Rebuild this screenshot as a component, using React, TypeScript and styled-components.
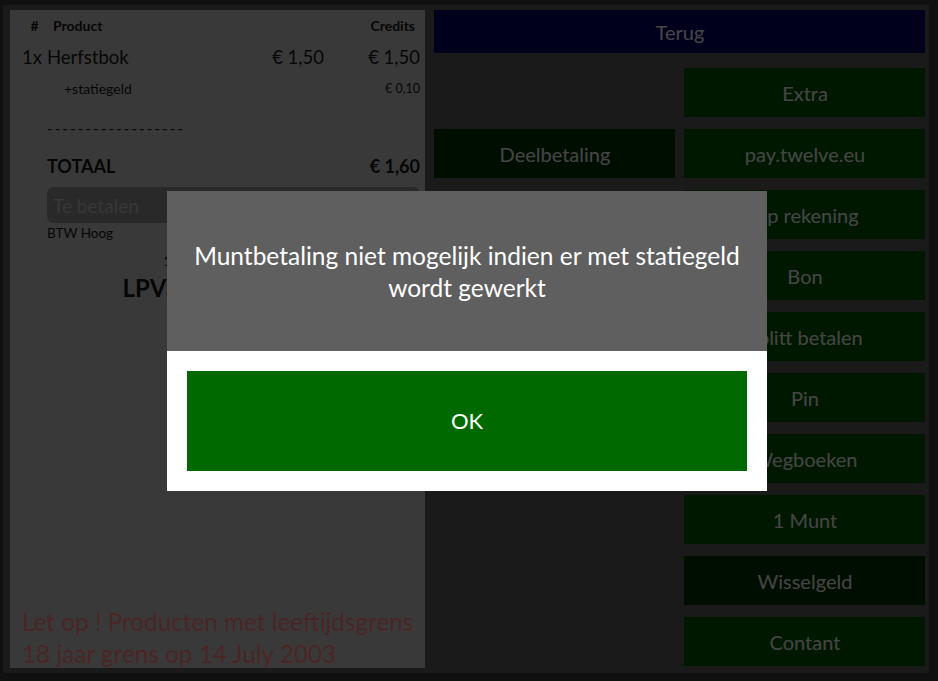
import React from 'react';
import styled, { createGlobalStyle } from 'styled-components';

const GlobalStyle = createGlobalStyle`
  html, body {
    margin: 0;
    padding: 0;
    background: #111111;
  }
  body {
    font-family: Lato, 'Open Sans', sans-serif;
  }
  * {
    box-sizing: border-box;
  }
`;

const Screen = styled.div`
  position: relative;
  width: 938px;
  height: 681px;
  overflow: hidden;
  background: #393939;
  padding: 5px 9px 8px 3px;
`;

const PayWindow = styled.div`
  height: 100%;
  display: flex;
  gap: 9px;
  padding: 5px 4px 5px 7px;
  background: #5a5a5a;
`;

const Receipt = styled.section`
  width: 415px;
  flex-shrink: 0;
  display: flex;
  flex-direction: column;
  padding: 6px 5px 0 12px;
  background: #c5c5c5;
  color: #151515;
`;

const Row = styled.div<{ $mt?: number; $size: number; $lh: number; $bold?: boolean }>`
  display: grid;
  grid-template-columns: 25px 1fr 74px 96px;
  align-items: center;
  margin-top: ${p => p.$mt || 0}px;
  font-size: ${p => p.$size}px;
  line-height: ${p => p.$lh}px;
  font-weight: ${p => (p.$bold ? 700 : 400)};
  white-space: nowrap;
`;

const Cell = styled.span<{ $align?: 'left' | 'center' | 'right'; $pad?: number }>`
  text-align: ${p => p.$align || 'left'};
  padding-left: ${p => p.$pad || 0}px;
`;

const RightCell = styled.span<{ $pad?: number; $size?: number }>`
  text-align: right;
  padding-right: ${p => p.$pad || 0}px;
  font-size: ${p => (p.$size ? `${p.$size}px` : 'inherit')};
`;

const Dashes = styled.div`
  margin: 19px 0 0 25px;
  font-size: 15px;
  line-height: 20px;
  letter-spacing: 2.1px;
`;

const PayInput = styled.input`
  margin: 10px 0 0 25px;
  width: 373px;
  height: 36px;
  border: none;
  border-radius: 7px;
  background: #8c8c8c;
  padding: 0 6px;
  font-family: inherit;
  font-size: 19px;
  outline: none;
  &::placeholder {
    color: #bcbcbc;
  }
`;

const SmallNote = styled.div`
  margin: 2px 0 0 25px;
  font-size: 13.5px;
  line-height: 16px;
`;

const CenterLine = styled.div<{ $mt: number; $size: number; $lh: number }>`
  margin-top: ${p => p.$mt}px;
  text-align: center;
  font-weight: 700;
  font-size: ${p => p.$size}px;
  line-height: ${p => p.$lh}px;
  white-space: nowrap;
`;

const AgeWarning = styled.div`
  margin-top: auto;
  margin-bottom: -2px;
  color: #ff8080;
  font-size: 24.3px;
  line-height: 32px;
  white-space: nowrap;
`;

const ButtonGrid = styled.div`
  flex: 1;
  display: grid;
  grid-template-columns: 1fr 1fr;
  grid-template-rows: 46px repeat(10, 49px);
  column-gap: 9px;
  row-gap: 12px;
  align-content: start;
`;

type Tone = 'navy' | 'green' | 'dark';

const toneColors: Record<Tone, string> = {
  navy: '#000066',
  green: '#005400',
  dark: '#003200',
};

const PayButton = styled.button<{ $tone: Tone; $col: string; $row: number }>`
  grid-column: ${p => p.$col};
  grid-row: ${p => p.$row};
  margin-bottom: ${p => (p.$row === 1 ? 3 : 0)}px;
  border: none;
  background: ${p => toneColors[p.$tone]};
  color: #eeeeee;
  font-family: inherit;
  font-size: 20px;
  padding: 0 0 0 1px;
  cursor: pointer;
`;

const Backdrop = styled.div`
  position: absolute;
  inset: 0;
  background: rgba(0, 0, 0, 0.71);
  display: flex;
  align-items: center;
  justify-content: center;
`;

const Modal = styled.div`
  width: 600px;
  margin-right: 4px;
  display: flex;
  flex-direction: column;
`;

const ModalBody = styled.div`
  height: 160px;
  background: #5f5f5f;
  color: #ffffff;
  text-align: center;
  padding: 49px 20px 0;
  font-size: 24.5px;
  line-height: 32px;
`;

const ModalFooter = styled.div`
  background: #ffffff;
  padding: 20px;
`;

const OkButton = styled.button`
  width: 100%;
  height: 100px;
  border: none;
  background: #006a00;
  color: #ffffff;
  font-family: inherit;
  font-size: 22px;
  cursor: pointer;
`;

const buttons: { label: string; tone: Tone; col: string; row: number }[] = [
  { label: 'Terug', tone: 'navy', col: '1 / -1', row: 1 },
  { label: 'Extra', tone: 'green', col: '2', row: 2 },
  { label: 'Deelbetaling', tone: 'dark', col: '1', row: 3 },
  { label: 'pay.twelve.eu', tone: 'green', col: '2', row: 3 },
  { label: 'Op rekening', tone: 'green', col: '2', row: 4 },
  { label: 'Bon', tone: 'green', col: '2', row: 5 },
  { label: 'Splitt betalen', tone: 'green', col: '2', row: 6 },
  { label: 'Pin', tone: 'green', col: '2', row: 7 },
  { label: 'Wegboeken', tone: 'green', col: '2', row: 8 },
  { label: '1 Munt', tone: 'green', col: '2', row: 9 },
  { label: 'Wisselgeld', tone: 'dark', col: '2', row: 10 },
  { label: 'Contant', tone: 'green', col: '2', row: 11 },
];

export default function App() {
  return (
    <>
      <GlobalStyle />
      <Screen>
        <PayWindow>
          <Receipt>
            <Row $size={14} $lh={20} $bold>
              <Cell $align="center">#</Cell>
              <Cell $pad={6}>Product</Cell>
              <span />
              <RightCell $pad={5}>Credits</RightCell>
            </Row>
            <Row $mt={8} $size={18.5} $lh={26}>
              <Cell>1x</Cell>
              <Cell>Herfstbok</Cell>
              <RightCell>€ 1,50</RightCell>
              <RightCell>€ 1,50</RightCell>
            </Row>
            <Row $mt={9} $size={14} $lh={20}>
              <span />
              <Cell $pad={17}>+statiegeld</Cell>
              <span />
              <RightCell $size={12.5}>€ 0,10</RightCell>
            </Row>
            <Dashes>------------------</Dashes>
            <Row $mt={17} $size={18} $lh={22} $bold>
              <span />
              <Cell>TOTAAL</Cell>
              <span />
              <RightCell>€ 1,60</RightCell>
            </Row>
            <PayInput placeholder="Te betalen" />
            <SmallNote>BTW Hoog</SmallNote>
            <CenterLine $mt={11} $size={14} $lh={18}>
              1 Munten = € 2,50
            </CenterLine>
            <CenterLine $mt={4} $size={24} $lh={28}>
              LPVS Stamgastpas
            </CenterLine>
            <AgeWarning>
              Let op ! Producten met leeftijdsgrens
              <br />
              18 jaar grens op 14 July 2003
            </AgeWarning>
          </Receipt>
          <ButtonGrid>
            {buttons.map(b => (
              <PayButton key={b.label} $tone={b.tone} $col={b.col} $row={b.row}>
                {b.label}
              </PayButton>
            ))}
          </ButtonGrid>
        </PayWindow>
        <Backdrop>
          <Modal>
            <ModalBody>Muntbetaling niet mogelijk indien er met statiegeld wordt gewerkt</ModalBody>
            <ModalFooter>
              <OkButton>OK</OkButton>
            </ModalFooter>
          </Modal>
        </Backdrop>
      </Screen>
    </>
  );
}
